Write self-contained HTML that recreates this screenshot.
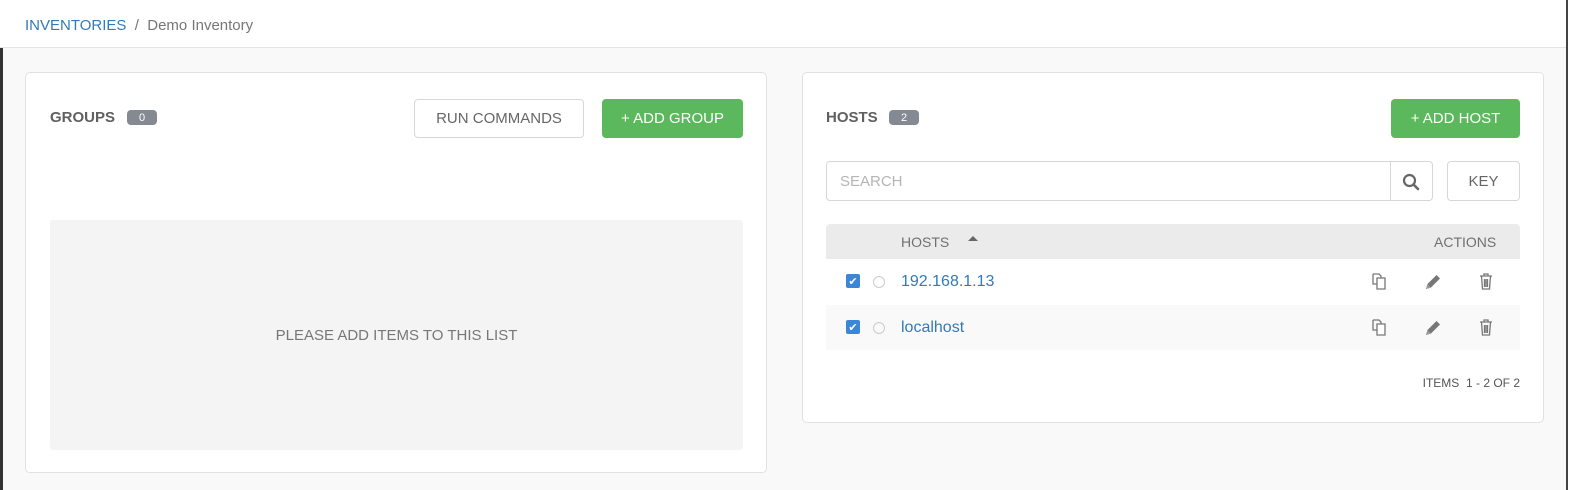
<!DOCTYPE html><html><head><style>
*{box-sizing:border-box;margin:0;padding:0}
body{width:1593px;height:490px;background:#f9f9f9;font-family:"Liberation Sans",sans-serif;position:relative;overflow:hidden;color:#707070}
.a{position:absolute}
.hdr{left:0;top:0;width:1566px;height:48px;background:#fff;border-bottom:1px solid #e4e4e4}
.panel{background:#fff;border:1px solid #e1e1e1;border-radius:5px}
.btn{border-radius:4px;font-size:15px;display:flex;align-items:center;justify-content:center}
.badge{background:#848992;color:#fff;font-size:11px;border-radius:4px;width:30px;height:15px;display:flex;align-items:center;justify-content:center}
.ttl{font-weight:bold;font-size:15px;color:#606060}
.cb{width:14px;height:14px;background:#3b87d6;border-radius:2px;color:#fff;font-size:11px;display:flex;align-items:center;justify-content:center}
.rd{width:12px;height:12px;border:1px solid #ccc;border-radius:50%}
.lnk{color:#337ab7;font-size:16px}
</style></head><body>
<div class="a" style="left:0;top:0;width:3px;height:490px;background:#333"></div>
<div class="a" style="left:1566px;top:0;width:2px;height:490px;background:#444"></div>
<div class="a" style="left:1568px;top:0;width:25px;height:490px;background:#fff"></div>
<div class="a hdr"></div>
<div class="a" style="left:25px;top:17px;font-size:15px"><span style="color:#337ab7">INVENTORIES</span><span style="color:#777">&nbsp; / &nbsp;Demo Inventory</span></div>

<div class="a panel" style="left:25px;top:72px;width:742px;height:401px"></div>
<div class="a ttl" style="left:50px;top:109px">GROUPS</div>
<div class="a badge" style="left:127px;top:110px">0</div>
<div class="a btn" style="left:414px;top:99px;width:170px;height:39px;border:1px solid #d7d7d7;color:#666;background:#fff">RUN COMMANDS</div>
<div class="a btn" style="left:602px;top:99px;width:141px;height:39px;background:#5cb85c;color:#fff">+ ADD GROUP</div>
<div class="a" style="left:50px;top:220px;width:693px;height:230px;background:#f4f4f4;border-radius:3px;display:flex;align-items:center;justify-content:center;font-size:15px;color:#777">PLEASE ADD ITEMS TO THIS LIST</div>

<div class="a panel" style="left:802px;top:72px;width:742px;height:351px"></div>
<div class="a ttl" style="left:826px;top:109px">HOSTS</div>
<div class="a badge" style="left:889px;top:110px">2</div>
<div class="a btn" style="left:1391px;top:99px;width:129px;height:39px;background:#5cb85c;color:#fff">+ ADD HOST</div>
<div class="a" style="left:826px;top:161px;width:607px;height:40px;border:1px solid #d7d7d7;border-radius:4px;background:#fff"></div>
<div class="a" style="left:840px;top:173px;font-size:15px;color:#b5b5b5">SEARCH</div>
<div class="a" style="left:1390px;top:161px;width:1px;height:40px;background:#d7d7d7"></div>
<svg class="a" style="left:1402px;top:173px" width="18" height="18" viewBox="0 0 18 18"><circle cx="7.5" cy="7.5" r="5.5" fill="none" stroke="#666" stroke-width="2.2"/><line x1="11.5" y1="11.5" x2="16" y2="16" stroke="#666" stroke-width="2.6" stroke-linecap="round"/></svg>
<div class="a btn" style="left:1447px;top:161px;width:73px;height:40px;border:1px solid #d7d7d7;color:#666;background:#fff">KEY</div>

<div class="a" style="left:826px;top:224px;width:694px;height:35px;background:#ebebeb;border-radius:4px 4px 0 0"></div>
<div class="a" style="left:901px;top:234px;font-size:14px;color:#707070">HOSTS</div>
<div class="a" style="left:968px;top:236px;width:0;height:0;border-left:5px solid transparent;border-right:5px solid transparent;border-bottom:5px solid #666"></div>
<div class="a" style="left:1434px;top:234px;font-size:14px;color:#707070">ACTIONS</div>
<div class="a" style="left:826px;top:305px;width:694px;height:45px;background:#f9f9f9"></div>

<div class="a cb" style="left:846px;top:274px">✔</div><div class="a rd" style="left:873px;top:276px"></div>
<div class="a lnk" style="left:901px;top:273px">192.168.1.13</div>
<div class="a cb" style="left:846px;top:320px">✔</div><div class="a rd" style="left:873px;top:322px"></div>
<div class="a lnk" style="left:901px;top:319px">localhost</div>

<svg width="0" height="0" style="position:absolute"><defs>
<g id="cp" fill="none" stroke="#777" stroke-width="1.3"><path d="M2 2h6l2 2v3M2 2v10h4"/><path d="M6 6h8v11H6z" fill="#fff"/></g>
<g id="pn"><path d="M2 17l1.5-5 9-9 3.5 3.5-9 9z" fill="#777"/><path d="M2 17l1.5-5 3.5 3.5z" fill="#999"/></g>
<g id="tr" fill="none" stroke="#777" stroke-width="1.3"><path d="M3 4h12M7 4V2h4v2M4.5 4l1 13h7l1-13M7.5 7v8M9 7v8M10.5 7v8"/></g>
</defs></svg>
<svg class="a" style="left:1371px;top:272px" width="20" height="20"><use href="#cp"/></svg>
<svg class="a" style="left:1424px;top:272px" width="20" height="20"><use href="#pn"/></svg>
<svg class="a" style="left:1477px;top:272px" width="20" height="20"><use href="#tr"/></svg>
<svg class="a" style="left:1371px;top:318px" width="20" height="20"><use href="#cp"/></svg>
<svg class="a" style="left:1424px;top:318px" width="20" height="20"><use href="#pn"/></svg>
<svg class="a" style="left:1477px;top:318px" width="20" height="20"><use href="#tr"/></svg>

<div class="a" style="left:1380px;top:376px;width:140px;text-align:right;font-size:12px;color:#555">ITEMS&nbsp; 1 - 2 OF 2</div>
</body></html>
